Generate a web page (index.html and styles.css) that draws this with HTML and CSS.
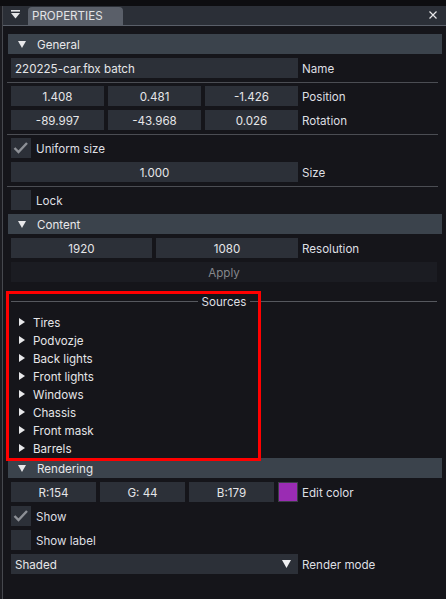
FILE: index.html
```html
<!DOCTYPE html>
<html>
<head>
<meta charset="utf-8">
<link rel="stylesheet" href="styles.css">
</head>
<body>
<div class="top"></div>
<div class="window">
  <div class="titlebar">
    <span class="collapse"><svg width="9" height="9" viewBox="0 0 9 9"><rect x="0" y="0" width="9" height="1.6" fill="#e6e6e8"/><polygon points="0,3 9,3 4.5,8.5" fill="#e6e6e8"/></svg></span>
    <div class="tab">PROPERTIES</div>
    <span class="close"><svg width="8" height="8" viewBox="0 0 8 8"><path d="M0.5 0.5 L7.5 7.5 M7.5 0.5 L0.5 7.5" stroke="#e6e6e8" stroke-width="1.2"/></svg></span>
  </div>
  <div class="content">
    <div class="header"><svg class="hdr-arrow" width="8" height="7" viewBox="0 0 8 7"><polygon points="0,0 8,0 4,7" fill="#e8e8ea"/></svg><span class="txt">General</span></div>
    <div class="row"><div class="field left"><span class="txt">220225-car.fbx batch</span></div><span class="label">Name</span></div>
    <div class="sep"></div>
    <div class="row"><div class="grid3"><div class="cell">1.408</div><div class="cell">0.481</div><div class="cell">-1.426</div></div><span class="label">Position</span></div>
    <div class="row"><div class="grid3"><div class="cell">-89.997</div><div class="cell">-43.968</div><div class="cell">0.026</div></div><span class="label">Rotation</span></div>
    <div class="sep"></div>
    <div class="row check-row"><div class="check"><svg width="20" height="20" viewBox="0 0 20 20"><polyline points="3.5,10 7.5,14 16,5" fill="none" stroke="#8d9096" stroke-width="2.4"/></svg></div><span class="label">Uniform size</span></div>
    <div class="row"><div class="field center"><span class="txt">1.000</span></div><span class="label">Size</span></div>
    <div class="sep"></div>
    <div class="row check-row"><div class="check"></div><span class="label">Lock</span></div>
    <div class="header"><svg class="hdr-arrow" width="8" height="7" viewBox="0 0 8 7"><polygon points="0,0 8,0 4,7" fill="#e8e8ea"/></svg><span class="txt">Content</span></div>
    <div class="row"><div class="grid2"><div class="cell">1920</div><div class="cell">1080</div></div><span class="label">Resolution</span></div>
    <div class="apply">Apply</div>
    <div class="septext"><span class="line"></span><span class="septitle">Sources</span><span class="line"></span></div>
    <div class="tree">
      <div class="node"><svg class="node-arrow" width="6" height="8" viewBox="0 0 6 8"><polygon points="0,0 6,4 0,8" fill="#e8e8ea"/></svg><span class="txt">Tires</span></div>
      <div class="node"><svg class="node-arrow" width="6" height="8" viewBox="0 0 6 8"><polygon points="0,0 6,4 0,8" fill="#e8e8ea"/></svg><span class="txt">Podvozje</span></div>
      <div class="node"><svg class="node-arrow" width="6" height="8" viewBox="0 0 6 8"><polygon points="0,0 6,4 0,8" fill="#e8e8ea"/></svg><span class="txt">Back lights</span></div>
      <div class="node"><svg class="node-arrow" width="6" height="8" viewBox="0 0 6 8"><polygon points="0,0 6,4 0,8" fill="#e8e8ea"/></svg><span class="txt">Front lights</span></div>
      <div class="node"><svg class="node-arrow" width="6" height="8" viewBox="0 0 6 8"><polygon points="0,0 6,4 0,8" fill="#e8e8ea"/></svg><span class="txt">Windows</span></div>
      <div class="node"><svg class="node-arrow" width="6" height="8" viewBox="0 0 6 8"><polygon points="0,0 6,4 0,8" fill="#e8e8ea"/></svg><span class="txt">Chassis</span></div>
      <div class="node"><svg class="node-arrow" width="6" height="8" viewBox="0 0 6 8"><polygon points="0,0 6,4 0,8" fill="#e8e8ea"/></svg><span class="txt">Front mask</span></div>
      <div class="node"><svg class="node-arrow" width="6" height="8" viewBox="0 0 6 8"><polygon points="0,0 6,4 0,8" fill="#e8e8ea"/></svg><span class="txt">Barrels</span></div>
    </div>
    <div class="header rendering"><svg class="hdr-arrow" width="8" height="7" viewBox="0 0 8 7"><polygon points="0,0 8,0 4,7" fill="#e8e8ea"/></svg><span class="txt">Rendering</span></div>
    <div class="row"><div class="gridcolor"><div class="cell">R:154</div><div class="cell">G: 44</div><div class="cell">B:179</div><div class="swatch"></div></div><span class="label">Edit color</span></div>
    <div class="row check-row"><div class="check"><svg width="20" height="20" viewBox="0 0 20 20"><polyline points="3.5,10 7.5,14 16,5" fill="none" stroke="#8d9096" stroke-width="2.4"/></svg></div><span class="label">Show</span></div>
    <div class="row check-row"><div class="check"></div><span class="label">Show label</span></div>
    <div class="row"><div class="field left combo"><span class="txt">Shaded</span><svg width="9" height="8" viewBox="0 0 9 8"><polygon points="0,0 9,0 4.5,8" fill="#f0f0f2"/></svg></div><span class="label">Render mode</span></div>
  </div>
</div>
<div class="highlight"></div>
</body>
</html>
```

FILE: styles.css
```css
html, body {
  margin: 0;
  padding: 0;
}
body {
  width: 446px;
  height: 599px;
  overflow: hidden;
  background: #1c1c21;
  font-family: Inter, "Noto Sans", sans-serif;
  font-size: 11.6px;
  color: #e6e6e8;
  position: relative;
}
.top {
  height: 6px;
  background: #0d0d10;
}
.window {
  margin-left: 2px;
  border-left: 1px solid #46484e;
  height: 593px;
  background: #15151a;
}
.titlebar {
  height: 19px;
  background: #2b2f37;
  border-bottom: 1px solid #5a5f69;
  display: flex;
  align-items: flex-end;
}
.collapse {
  width: 9px;
  height: 9px;
  margin: 0 8px 6px 8px;
  display: flex;
}
.tab {
  width: 95px;
  height: 18px;
  box-sizing: border-box;
  background: #5a5f69;
  border-radius: 4px 4px 0 0;
  padding: 1px 0 0 4px;
  line-height: 17px;
  color: #e2e3e6;
}
.close {
  margin-left: auto;
  margin-right: 9px;
  margin-bottom: 6px;
  display: flex;
}
.content {
  padding: 8px 4px 0 5px;
  display: flex;
  flex-direction: column;
  gap: 4px;
}
.txt {
  padding-top: 2px;
}
.header {
  height: 20px;
  background: #3b434c;
  display: flex;
  align-items: center;
  padding-left: 10px;
  color: #e8e8ea;
}
.hdr-arrow {
  margin-right: 11px;
}
.row {
  display: flex;
  align-items: center;
  gap: 4px;
  margin-left: 3px;
  height: 20px;
}
.field {
  width: 287px;
  height: 20px;
  box-sizing: border-box;
  background: #2c3038;
  display: flex;
  align-items: center;
}
.field.left {
  padding-left: 4px;
}
.field.center {
  justify-content: center;
}
.combo {
  justify-content: space-between;
  padding-right: 7px;
}
.label {
  color: #dedfe2;
  padding-top: 2px;
}
.grid3 {
  width: 287px;
  display: grid;
  grid-template-columns: repeat(3, 1fr);
  gap: 4px;
}
.grid2 {
  width: 287px;
  display: grid;
  grid-template-columns: 141px 142px;
  gap: 4px;
}
.gridcolor {
  width: 287px;
  display: grid;
  grid-template-columns: 85px 85px 85px 20px;
  gap: 4px;
}
.cell {
  height: 20px;
  box-sizing: border-box;
  padding-top: 2px;
  background: #2c3038;
  text-align: center;
  line-height: 18px;
}
.swatch {
  height: 20px;
  box-sizing: border-box;
  background: #9a2cb3;
  border: 1px solid #3c3e46;
}
.sep {
  height: 1px;
  background: #4b4d53;
  margin: 0 4px -1px -1px;
}
.check-row {
  gap: 5px;
}
.check {
  width: 20px;
  height: 20px;
  background: #2c3038;
}
.check svg {
  display: block;
}
.apply {
  margin-left: 3px;
  width: 426px;
  height: 20px;
  box-sizing: border-box;
  padding-top: 2px;
  background: #1b1c22;
  color: #85878c;
  text-align: center;
  line-height: 18px;
}
.septext {
  margin: 8px 0 0 3px;
  width: 426px;
  height: 14px;
  display: flex;
  align-items: center;
  gap: 4px;
}
.line {
  flex: 1;
  height: 1px;
  background: #56585e;
}
.septitle {
  color: #dedfe2;
  padding-top: 2px;
}
.tree {
  margin-top: 3px;
  display: flex;
  flex-direction: column;
  gap: 4px;
}
.node {
  margin-left: 3px;
  height: 14px;
  display: flex;
  align-items: center;
  padding-left: 8px;
}
.node-arrow {
  margin-right: 8px;
}
.rendering {
  margin-top: -1px;
}
.highlight {
  position: absolute;
  left: 6px;
  top: 291px;
  width: 255px;
  height: 170px;
  box-sizing: border-box;
  border: 3px solid #ff0000;
}
```
